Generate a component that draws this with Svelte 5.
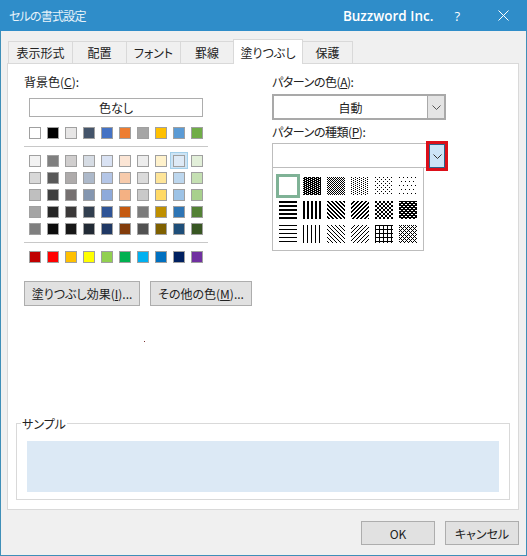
<script lang="ts">
  const theme = ['#ffffff', '#000000', '#e7e6e6', '#44546a', '#4472c4', '#ed7d31', '#a5a5a5', '#ffc000', '#5b9bd5', '#70ad47'];
  const tints = [
    ['#f2f2f2', '#7f7f7f', '#d0cece', '#d6dce4', '#d9e2f3', '#fbe5d5', '#ededed', '#fff2cc', '#deeaf6', '#e2efd9'],
    ['#d8d8d8', '#595959', '#aeabab', '#adb9ca', '#b4c6e7', '#f7cbac', '#dbdbdb', '#fee599', '#bdd7ee', '#c5e0b3'],
    ['#bfbfbf', '#3f3f3f', '#757070', '#8496b0', '#8eaadb', '#f4b183', '#c9c9c9', '#ffd965', '#9dc3e6', '#a8d08d'],
    ['#a5a5a5', '#262626', '#3a3838', '#323f4f', '#2f5496', '#c55a11', '#7b7b7b', '#bf8f00', '#2e75b5', '#538135'],
    ['#7f7f7f', '#0c0c0c', '#171717', '#222a35', '#1f3864', '#833c0b', '#525252', '#7f6000', '#1e4e79', '#385623']
  ];
  const standard = ['#c00000', '#ff0000', '#ffc000', '#ffff00', '#92d050', '#00b050', '#00b0f0', '#0070c0', '#002060', '#7030a0'];
  const tabs = ['表示形式', '配置', 'フォント', '罫線', '塗りつぶし', '保護'];

  // each pattern is one repeating tile, 1 = black pixel
  const patterns = [
    ['0'],
    ['0111', '1101'],
    ['10', '01'],
    ['1000', '0010'],
    ['1000', '0000', '0010', '0000'],
    ['1000', '0000', '0000', '0000', '0010', '0000', '0000', '0000'],
    ['1', '1', '0', '0'],
    ['1100'],
    ['1100', '0110', '0011', '1001'],
    ['0011', '0110', '1100', '1001'],
    ['1100', '1100', '0011', '0011'],
    ['1111', '0011', '1111', '1100'],
    ['1', '0', '0', '0'],
    ['1000'],
    ['1000', '0100', '0010', '0001'],
    ['0001', '0010', '0100', '1000'],
    ['1111', '1000', '1000', '1000'],
    ['1010', '0100', '1010', '0001']
  ];

  function tilePath(tile: string[]): string {
    let d = '';
    for (let y = 0; y < 18; y++) {
      const row = tile[y % tile.length];
      for (let x = 0; x < 18; x++) {
        if (row[x % row.length] === '1') d += `M${x} ${y}h1v1h-1z`;
      }
    }
    return d;
  }
</script>

<div class="dialog">
  <header class="titlebar">
    <span class="title">セルの書式設定</span>
    <span class="brand">Buzzword Inc.</span>
    <span class="help">?</span>
    <svg class="close" width="11" height="11" viewBox="0 0 11 11"><path d="M0.5 0.5l10 10M10.5 0.5l-10 10" stroke="#fff" fill="none" /></svg>
  </header>

  <div class="body">
    <div class="tabs">
      {#each tabs as tab, i}
        <div class="tab tab-{i}" class:active={i === 4}>{tab}</div>
      {/each}
    </div>

    <div class="panel">
      <div class="columns">
        <div class="left">
          <div class="label">背景色(<u>C</u>):</div>
          <div class="no-color">色なし</div>

          <div class="swatches first">
            {#each theme as c}
              <div class="cell"><span class="swatch" style="background:{c}"></span></div>
            {/each}
          </div>
          <div class="sep"></div>
          <div class="swatches">
            {#each tints as row, r}
              {#each row as c, i}
                <div class="cell" class:selected={r === 0 && i === 8}><span class="swatch" style="background:{c}"></span></div>
              {/each}
            {/each}
          </div>
          <div class="sep"></div>
          <div class="swatches">
            {#each standard as c}
              <div class="cell"><span class="swatch" style="background:{c}"></span></div>
            {/each}
          </div>

          <div class="actions">
            <button class="btn effect">塗りつぶし効果(<u>I</u>)...</button>
            <button class="btn more">その他の色(<u>M</u>)...</button>
          </div>
        </div>

        <div class="right">
          <div class="label">パターンの色(<u>A</u>):</div>
          <div class="combo auto">
            <span class="combo-value">自動</span>
            <span class="arrow">
              <svg width="9" height="5" viewBox="0 0 9 5"><path d="M0.5 0.5l4 4 4-4" stroke="#555" fill="none" /></svg>
            </span>
          </div>

          <div class="label pattern-label">パターンの種類(<u>P</u>):</div>
          <div class="pattern-wrap">
            <div class="combo open">
              <span class="combo-value"></span>
              <span class="arrow hot">
                <svg width="9" height="5" viewBox="0 0 9 5"><path d="M0.5 0.5l4 4 4-4" stroke="#333" fill="none" /></svg>
              </span>
            </div>
            <div class="popup">
              {#each patterns as tile, i}
                <div class="pattern" class:current={i === 0}>
                  <svg width="18" height="18" viewBox="0 0 18 18" shape-rendering="crispEdges"><path d={tilePath(tile)} fill="#000" /></svg>
                </div>
              {/each}
            </div>
          </div>
        </div>
      </div>

      <span class="speck"></span>

      <fieldset class="sample">
        <legend>サンプル</legend>
        <div class="preview"></div>
      </fieldset>
    </div>

    <div class="footer">
      <button class="btn ok">OK</button>
      <button class="btn ok">キャンセル</button>
    </div>
  </div>
</div>

<style>
  :global(body) {
    margin: 0;
  }

  .dialog {
    width: 527px;
    height: 556px;
    box-sizing: border-box;
    display: flex;
    flex-direction: column;
    background: #f0f0f0;
    border: 1px solid #3f8fb8;
    border-top: none;
    font-family: "Noto Sans CJK JP", "Noto Sans", sans-serif;
    font-size: 12px;
    font-feature-settings: "palt";
    color: #222;
  }

  .titlebar {
    height: 31px;
    margin: 0 -1px;
    padding: 0 18px 0 9px;
    flex-shrink: 0;
    display: flex;
    align-items: center;
    background: #2f8dc9;
    color: #fff;
  }

  .title {
    flex: 1;
    color: #e8f3fa;
    letter-spacing: -0.8px;
  }

  .brand {
    font-family: "Open Sans", sans-serif;
    font-size: 13.5px;
    font-weight: 600;
    margin-right: 21px;
  }

  .help {
    font-family: "Open Sans", sans-serif;
    font-size: 13px;
    margin-right: 38px;
  }

  .body {
    flex: 1;
    display: flex;
    flex-direction: column;
    padding: 0 7px 0 6px;
    min-height: 0;
  }

  .tabs {
    height: 32px;
    flex-shrink: 0;
    display: flex;
    align-items: flex-end;
    padding-left: 1px;
  }

  .tab {
    box-sizing: border-box;
    height: 22px;
    display: flex;
    align-items: center;
    justify-content: center;
    background: #f0f0f0;
    border: 1px solid #d9d9d9;
    border-bottom: none;
    margin-right: -1px;
    width: 65px;
  }

  .tab-1, .tab-2 { width: 55px; }
  .tab-3 { width: 54px; }
  .tab-5 { width: 51px; }

  .tab.active {
    position: relative;
    z-index: 1;
    width: 70px;
    height: 25px;
    margin-bottom: -1px;
    background: #fff;
  }

  .panel {
    position: relative;
    height: 447px;
    box-sizing: border-box;
    display: flex;
    flex-direction: column;
    background: #fff;
    border: 1px solid #d9d9d9;
    padding: 0 8px 9px 8px;
  }

  .columns {
    display: flex;
    padding-left: 8px;
  }

  .left {
    width: 248px;
    flex-shrink: 0;
  }

  .label {
    height: 17px;
    line-height: 17px;
    margin-top: 9px;
  }

  .no-color {
    box-sizing: border-box;
    width: 174px;
    height: 19px;
    margin: 8px 0 0 5px;
    border: 1px solid #adadad;
    text-align: center;
    line-height: 17px;
    background: #fff;
  }

  .swatches {
    display: grid;
    grid-template-columns: repeat(10, 18px);
    grid-auto-rows: 17px;
    margin-left: 2px;
  }

  .swatches.first {
    margin-top: 8px;
  }

  .cell {
    display: flex;
    justify-content: center;
    align-items: flex-start;
    padding-top: 2px;
    width: 18px;
    height: 17px;
    box-sizing: border-box;
  }

  .cell.selected {
    height: 17px;
    margin-top: -1px;
    padding-top: 2px;
    background: #cde4f5;
    border: 1px solid #a3cfe9;
  }

  .swatch {
    box-sizing: border-box;
    width: 12px;
    height: 12px;
    border: 1px solid #a0a0a0;
  }

  .sep {
    width: 184px;
    height: 1px;
    background: #c8c8c8;
    margin: 4px 0 6px;
  }

  .actions {
    display: flex;
    gap: 10px;
    margin-top: 15px;
  }

  .btn {
    box-sizing: border-box;
    height: 25px;
    padding: 0;
    background: #e1e1e1;
    border: 1px solid #adadad;
    font: inherit;
    color: inherit;
  }

  .effect { width: 116px; }
  .more { width: 102px; }

  .right {
    width: 174px;
  }

  .right .label {
    letter-spacing: -0.45px;
  }

  .combo {
    box-sizing: border-box;
    display: flex;
    width: 174px;
    background: #fff;
  }

  .combo.auto {
    height: 26px;
    margin-top: 4px;
    border: 2px solid #a9a9a9;
  }

  .combo-value {
    flex: 1;
    display: flex;
    align-items: center;
    justify-content: center;
  }

  .arrow {
    width: 16px;
    display: flex;
    align-items: center;
    justify-content: center;
    background: #e4e4e4;
    border-left: 1px solid #a9a9a9;
  }

  .right .pattern-label {
    margin-top: 3px;
  }

  .pattern-wrap {
    position: relative;
    margin-top: 3px;
  }

  .combo.open {
    height: 25px;
    border: 1px solid #bdbdbd;
    border-right: none;
  }

  .arrow.hot {
    box-sizing: border-box;
    flex-shrink: 0;
    width: 22px;
    height: 30px;
    margin: -3px -2px 0 0;
    background: #cce4f7;
    border: 3px solid #dc0f1a;
    box-shadow: inset 0 0 0 1px #2c628b;
  }

  .popup {
    position: absolute;
    top: 25px;
    left: 0;
    box-sizing: border-box;
    width: 152px;
    height: 83px;
    padding: 6px 0 0 3px;
    display: grid;
    grid-template-columns: repeat(6, 24px);
    grid-auto-rows: 24px;
    background: #fff;
    border: 1px solid #bdbdbd;
    border-top: none;
    z-index: 2;
  }

  .pattern {
    box-sizing: border-box;
    width: 24px;
    height: 24px;
    display: flex;
    align-items: center;
    justify-content: center;
    border: 3px solid transparent;
  }

  .pattern.current {
    border-color: #7fb296;
  }

  .speck {
    position: absolute;
    left: 136px;
    top: 277px;
    width: 1px;
    height: 1px;
    background: #7a3030;
  }

  .sample {
    margin: auto 0 0 0;
    padding: 9px 10px 8px 10px;
    height: 85px;
    box-sizing: border-box;
    border: 1px solid #d9d9d9;
    min-width: 0;
  }

  .sample legend {
    padding: 0 1px;
    margin-left: -6px;
    line-height: 17px;
  }

  .preview {
    height: 51px;
    background: #dce9f5;
  }

  .footer {
    display: flex;
    justify-content: flex-end;
    gap: 10px;
    margin-top: 11px;
  }

  .ok {
    width: 74px;
    height: 24px;
  }
</style>
